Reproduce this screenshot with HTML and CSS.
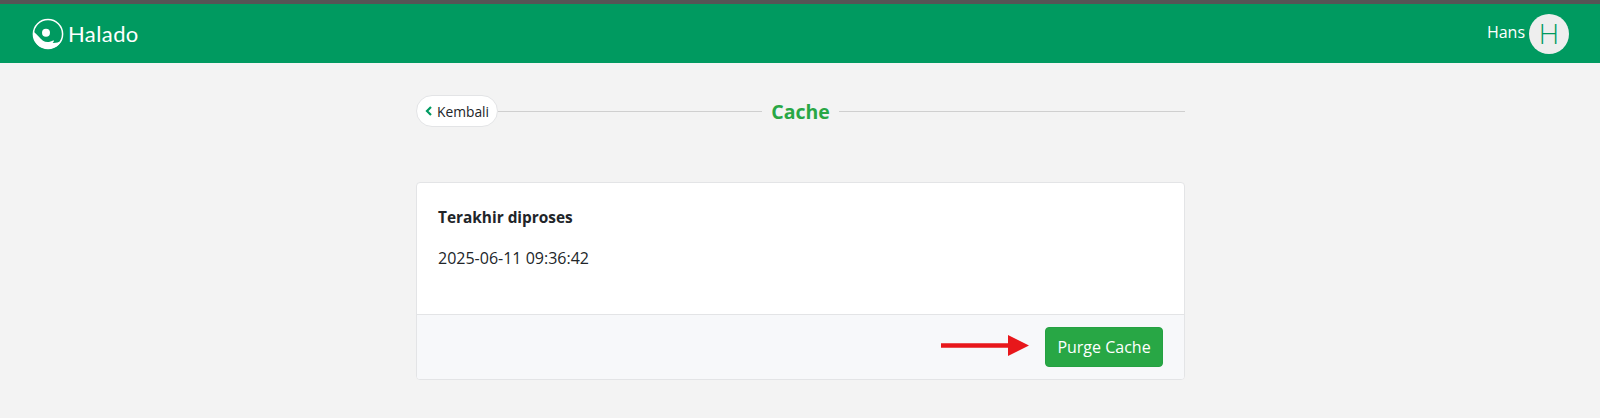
FILE: index.html
```html
<!DOCTYPE html>
<html lang="id">
<head>
    <meta charset="UTF-8">
    <meta name="viewport" content="width=device-width, initial-scale=1.0">
    <title>Cache</title>
    <link rel="stylesheet" href="styles.css">
</head>
<body>
    <header class="topbar">
        <a class="brand" href="#">
            <svg class="brand-icon" width="32" height="32" viewBox="0 0 32 32" aria-hidden="true">
                <circle cx="16" cy="16" r="14.6" fill="none" stroke="#fff" stroke-width="1.5"/>
                <circle cx="14" cy="14.7" r="4" fill="#fff"/>
                <path d="M1.3 13.5 C5 16 8 20.5 11 22.8 C14 24.6 18 24.4 21.5 22.2 C22.2 23 21.8 24.2 20.6 25 C23.5 25.2 26.5 24.6 29.4 22.8 A15 15 0 0 1 1.3 13.5 Z" fill="#fff"/>
            </svg>
            <span class="brand-name">Halado</span>
        </a>
        <div class="user">
            <span class="user-name">Hans</span>
            <span class="user-avatar">H</span>
        </div>
    </header>

    <main class="content">
        <div class="page-title">
            <div class="page-title-left">
                <a class="back-btn" href="#">
                    <svg width="8" height="10" viewBox="0 0 8 10" aria-hidden="true">
                        <path d="M6 1 L2 5 L6 9" fill="none" stroke="#009b62" stroke-width="2.2"/>
                    </svg>
                    Kembali
                </a>
                <span class="rule"></span>
            </div>
            <h1>Cache</h1>
            <span class="rule"></span>
        </div>

        <section class="card">
            <div class="card-body">
                <h2>Terakhir diproses</h2>
                <p>2025-06-11 09:36:42</p>
            </div>
            <div class="card-footer">
                <svg class="arrow" width="88" height="21" viewBox="0 0 88 21" aria-hidden="true">
                    <path d="M0 8.2 H67 V0 L88 10.5 L67 21 V12.8 H0 Z" fill="#e8171b"/>
                </svg>
                <button class="btn-purge" type="button">Purge Cache</button>
            </div>
        </section>
    </main>
</body>
</html>
```

FILE: styles.css
```css
:root {
    --green: #009a60;
    --green-text: #28a745;
    --line: #cfcfcf;
    --border: #e3e4e6;
    --text: #212529;
}

* {
    margin: 0;
    padding: 0;
    box-sizing: border-box;
}

body {
    font-family: "Open Sans", "Noto Sans", "Liberation Sans", sans-serif;
    font-size: 16px;
    background-color: #f3f3f3;
    color: var(--text);
    min-height: 100vh;
    border-top: 4px solid #555;
}

.topbar {
    height: 59px;
    background-color: var(--green);
    display: flex;
    align-items: center;
    justify-content: space-between;
    padding: 0 31px 0 32px;
}

.brand {
    display: flex;
    align-items: center;
    gap: 4px;
    color: white;
    text-decoration: none;
}

.brand-name {
    font-family: "Lato", sans-serif;
    font-size: 22px;
    letter-spacing: 0.4px;
}

.user {
    display: flex;
    align-items: center;
    gap: 4px;
    color: white;
}

.user-name {
    margin-bottom: 3px;
}

.user-avatar {
    width: 40px;
    height: 40px;
    border-radius: 50%;
    background-color: #eeeeee;
    color: var(--green);
    display: flex;
    align-items: center;
    justify-content: center;
    font-family: "Lato", sans-serif;
    font-weight: 300;
    font-size: 27px;
}

.content {
    width: 769px;
    margin-left: 416px;
    padding-top: 32px;
}

.page-title {
    display: grid;
    grid-template-columns: 1fr auto 1fr;
    align-items: center;
}

.page-title h1 {
    font-size: 19.5px;
    font-weight: 700;
    color: var(--green-text);
    padding: 0 9px;
    line-height: 31px;
}

.page-title-left {
    display: flex;
    align-items: center;
}

.rule {
    flex: 1;
    height: 1px;
    background-color: var(--line);
}

.back-btn {
    display: flex;
    align-items: center;
    gap: 4px;
    height: 32px;
    padding: 0 8px;
    background-color: white;
    border: 1px solid var(--border);
    border-radius: 16px;
    color: var(--text);
    font-size: 13.8px;
    text-decoration: none;
}

.card {
    margin-top: 55px;
    background-color: white;
    border: 1px solid var(--border);
    border-radius: 4px;
    overflow: hidden;
}

.card-body {
    height: 131px;
    padding: 23px 21px;
}

.card-body h2 {
    font-size: 15.4px;
    font-weight: 700;
    line-height: 24px;
    margin-bottom: 16px;
}

.card-body p {
    line-height: 24px;
}

.card-footer {
    height: 65px;
    background-color: #f7f8fa;
    border-top: 1px solid var(--border);
    display: flex;
    align-items: center;
    justify-content: flex-end;
    gap: 16px;
    padding: 0 21px;
}

.arrow {
    margin-bottom: 3px;
}

.btn-purge {
    width: 118px;
    height: 40px;
    background-color: var(--green-text);
    border: 1px solid #25a142;
    border-radius: 4px;
    color: white;
    font-family: inherit;
    font-size: 16px;
    cursor: pointer;
}
```
